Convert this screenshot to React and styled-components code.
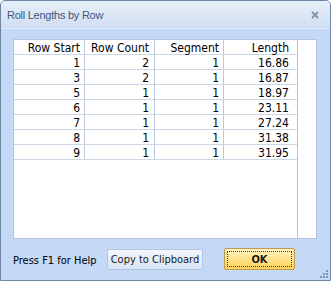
import React from 'react';
import styled, { createGlobalStyle } from 'styled-components';

const Global = createGlobalStyle`
  html, body {
    margin: 0;
    padding: 0;
    background: #ffffff;
  }
  body {
    width: 331px;
    height: 281px;
    overflow: hidden;
  }
`;

const Window = styled.div`
  box-sizing: border-box;
  width: 331px;
  height: 281px;
  border: 1px solid #6d86a8;
  border-radius: 5px 5px 0 0;
  background: #c3d9f6;
  display: flex;
  flex-direction: column;
  position: relative;
  overflow: hidden;
  font-family: "DejaVu Sans Condensed", "DejaVu Sans", sans-serif;
  color: #000;
`;

const TitleBar = styled.div`
  height: 27px;
  flex: none;
  display: flex;
  align-items: center;
  justify-content: space-between;
  padding: 0 11px 0 6px;
  background: linear-gradient(#e6eef8, #dbe6f5 55%, #cfdef3);
  border-bottom: 1px solid #e2ecf9;
`;

const Title = styled.span`
  font-family: "Liberation Sans", Arial, sans-serif;
  font-size: 11px;
  letter-spacing: -0.25px;
  color: #3c5880;
  padding-top: 1px;
`;

const Close = styled.svg`
  width: 8px;
  height: 8px;
  margin-top: 1px;
`;

const Body = styled.div`
  flex: 1;
  display: flex;
  flex-direction: column;
  padding: 10px 13px 0 12px;
  min-height: 0;
`;

const Grid = styled.div`
  box-sizing: border-box;
  height: 200px;
  flex: none;
  border: 1px solid #b4c6de;
  background: #ffffff;
  display: flex;
`;

const Sheet = styled.div`
  width: 283px;
  border-right: 1px solid #b3c3d8;
  display: flex;
  flex-direction: column;
`;

const Row = styled.div`
  display: flex;
  height: 14px;
  border-bottom: 1px solid #ccd7e5;
`;

const Cell = styled.div`
  box-sizing: border-box;
  width: ${(p) => p.$w}px;
  padding-right: ${(p) => p.$pad}px;
  border-right: ${(p) => (p.$last ? 'none' : '1px solid #b9c8dc')};
  text-align: right;
  font-size: 12px;
  line-height: 16px;
  white-space: nowrap;
`;

const Footer = styled.div`
  flex: 1;
  display: flex;
  align-items: center;
  padding: 0 22px 1px 0;
`;

const Help = styled.span`
  width: 94px;
  font-size: 11px;
  padding-top: 2px;
`;

const Button = styled.button`
  box-sizing: border-box;
  height: 21px;
  width: 96px;
  padding: 0;
  border: 1px solid #b2c6e0;
  border-radius: 2px;
  background: linear-gradient(#f3f7fc, #e5edf8 50%, #d9e5f5);
  font-family: inherit;
  font-size: 11px;
  color: #1a1a1a;
`;

const OkButton = styled.button`
  box-sizing: border-box;
  margin-left: auto;
  height: 22px;
  width: 71px;
  padding: 2px;
  border: 1px solid #c29a4e;
  border-radius: 2px;
  background: linear-gradient(#fff5c4, #ffe48f 45%, #ffd65a);
  font-family: inherit;
  font-size: 11px;
  font-weight: bold;
  color: #1a1a1a;
`;

const Focus = styled.span`
  display: flex;
  align-items: center;
  justify-content: center;
  height: 100%;
  border: 1px dotted #3a3a3a;
  box-sizing: border-box;
`;

const Grip = styled.svg`
  position: absolute;
  right: 1px;
  bottom: 1px;
  width: 10px;
  height: 10px;
`;

const columns = [
  { label: 'Row Start', w: 71, pad: 4 },
  { label: 'Row Count', w: 70, pad: 5 },
  { label: 'Segment', w: 69, pad: 4 },
  { label: 'Length', w: 73, pad: 8, last: true },
];

const rows = [
  [1, 2, 1, '16.86'],
  [3, 2, 1, '16.87'],
  [5, 1, 1, '18.97'],
  [6, 1, 1, '23.11'],
  [7, 1, 1, '27.24'],
  [8, 1, 1, '31.38'],
  [9, 1, 1, '31.95'],
];

export default function App() {
  return (
    <>
      <Global />
      <Window>
        <TitleBar>
          <Title>Roll Lengths by Row</Title>
          <Close viewBox="0 0 8 8">
            <path d="M1 1 L7 7 M7 1 L1 7" stroke="#8192a9" strokeWidth="1.9" />
          </Close>
        </TitleBar>
        <Body>
          <Grid>
            <Sheet>
              <Row>
                {columns.map((c) => (
                  <Cell key={c.label} $w={c.w} $pad={c.pad} $last={c.last}>
                    {c.label}
                  </Cell>
                ))}
              </Row>
              {rows.map((r, i) => (
                <Row key={i}>
                  {r.map((v, j) => (
                    <Cell key={j} $w={columns[j].w} $pad={columns[j].pad} $last={columns[j].last}>
                      {v}
                    </Cell>
                  ))}
                </Row>
              ))}
            </Sheet>
          </Grid>
          <Footer>
            <Help>Press F1 for Help</Help>
            <Button>Copy to Clipboard</Button>
            <OkButton>
              <Focus>OK</Focus>
            </OkButton>
          </Footer>
        </Body>
        <Grip viewBox="0 0 10 10">
          {[
            [7, 1],
            [4, 4],
            [7, 4],
            [1, 7],
            [4, 7],
            [7, 7],
          ].map(([x, y], i) => (
            <rect key={i} x={x} y={y} width="2" height="2" fill="#7f95b3" />
          ))}
        </Grip>
      </Window>
    </>
  );
}
